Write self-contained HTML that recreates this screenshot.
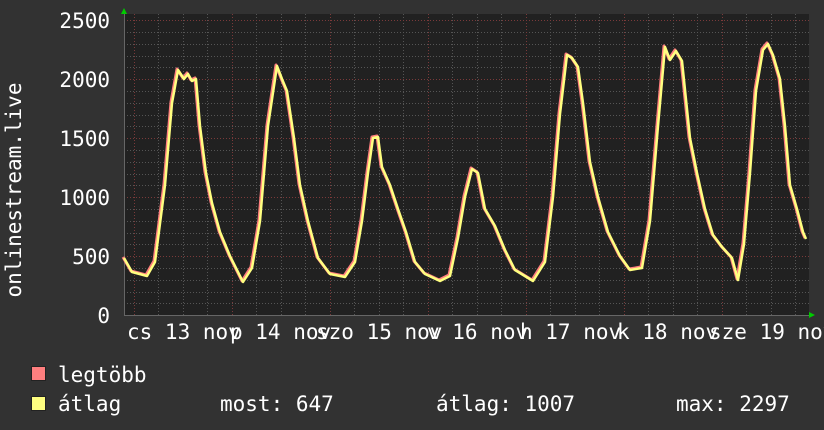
<!DOCTYPE html>
<html><head><meta charset="utf-8"><style>
html,body{margin:0;padding:0;background:#333333;}
svg{display:block}
text{font-family:"DejaVu Sans Mono","Liberation Mono",monospace;fill:#ffffff;}
</style></head><body>
<svg width="824" height="430" viewBox="0 0 824 430" xmlns="http://www.w3.org/2000/svg">
<rect width="824" height="430" fill="#323232"/>
<rect x="124" y="14" width="685" height="301" fill="#212121"/>
<g stroke="#555" stroke-width="1" stroke-dasharray="1,2">
<path d="M124 32.5H809M124 44.5H809M124 56.5H809M124 67.5H809M124 91.5H809M124 103.5H809M124 115.5H809M124 126.5H809M124 150.5H809M124 162.5H809M124 174.5H809M124 185.5H809M124 209.5H809M124 221.5H809M124 233.5H809M124 244.5H809M124 268.5H809M124 280.5H809M124 292.5H809M124 303.5H809"/>
<path d="M158.5 14V315M183.5 14V315M207.5 14V315M256.5 14V315M281.5 14V315M305.5 14V315M354.5 14V315M379.5 14V315M403.5 14V315M452.5 14V315M477.5 14V315M501.5 14V315M550.5 14V315M575.5 14V315M599.5 14V315M648.5 14V315M673.5 14V315M697.5 14V315M746.5 14V315M771.5 14V315M795.5 14V315"/>
</g>
<g stroke="#7a3a3a" stroke-width="1" stroke-dasharray="1,2">
<path d="M124 20.5H809M124 79.5H809M124 138.5H809M124 197.5H809M124 256.5H809"/>
<path d="M134.5 14V315M232.5 14V315M330.5 14V315M428.5 14V315M526.5 14V315M624.5 14V315M722.5 14V315"/>
</g>
<path d="M124 315.5H809" stroke="#666" stroke-width="1"/>
<path d="M124.5 14V315" stroke="#666" stroke-width="1"/>
<polygon points="121,14 127,14 124,8" fill="#00cc00"/>
<polygon points="809,312 809,318 815,315" fill="#00cc00"/>
<g fill="none" stroke-linejoin="round">
<polyline stroke="#ff7f7f" stroke-width="3" transform="translate(-1,-1)" points="124,258 132,272 147,276 155,262 165,185 172,103 178,70 184,79 188,74 192,81 196,79 200,126 206,173 212,203 220,232 230,256 243,282 252,268 260,221 268,126 277,66 282,79 287,91 294,138 300,185 308,221 318,258 330,274 345,277 355,262 362,221 368,173 373,138 378,137 382,167 390,185 398,209 406,232 415,262 425,274 440,281 450,276 458,238 465,197 472,169 478,173 485,209 495,226 505,250 515,270 533,281 545,262 553,197 560,114 567,55 572,58 578,67 583,103 590,162 598,197 608,232 620,256 630,270 642,268 650,221 658,126 665,47 670,60 676,51 682,61 690,138 697,173 705,209 713,235 722,247 732,258 738,280 744,244 750,173 756,91 763,50 768,44 773,55 780,79 785,126 790,185 797,209 803,232 806,239"/>
<polyline stroke="#ffff80" stroke-width="2.5" points="124,258 132,272 147,276 155,262 165,185 172,103 178,70 184,79 188,74 192,81 196,79 200,126 206,173 212,203 220,232 230,256 243,282 252,268 260,221 268,126 277,66 282,79 287,91 294,138 300,185 308,221 318,258 330,274 345,277 355,262 362,221 368,173 373,138 378,137 382,167 390,185 398,209 406,232 415,262 425,274 440,281 450,276 458,238 465,197 472,169 478,173 485,209 495,226 505,250 515,270 533,281 545,262 553,197 560,114 567,55 572,58 578,67 583,103 590,162 598,197 608,232 620,256 630,270 642,268 650,221 658,126 665,47 670,60 676,51 682,61 690,138 697,173 705,209 713,235 722,247 732,258 738,280 744,244 750,173 756,91 763,50 768,44 773,55 780,79 785,126 790,185 797,209 803,232 806,239"/>
</g>
<g font-size="21" text-anchor="end">
<text x="110" y="28">2500</text>
<text x="110" y="87">2000</text>
<text x="110" y="146">1500</text>
<text x="110" y="205">1000</text>
<text x="110" y="264">500</text>
<text x="110" y="323">0</text>
</g>
<g font-size="21">
<text x="127" y="339">cs 13 nov</text>
<text x="230" y="339">p 14 nov</text>
<text x="316" y="339">szo 15 nov</text>
<text x="427" y="339">v 16 nov</text>
<text x="520" y="339">h 17 nov</text>
<text x="617" y="339">k 18 nov</text>
<text x="709" y="339">sze 19 nov</text>
</g>
<text font-size="21" transform="translate(21,190) rotate(-90)" text-anchor="middle">onlinestream.live</text>
<rect x="31.5" y="366.5" width="14" height="14" fill="#ff7f7f" stroke="#222"/>
<rect x="31.5" y="396.5" width="14" height="14" fill="#ffff80" stroke="#222"/>
<g font-size="21">
<text x="58" y="382">legtöbb</text>
<text x="58" y="411">átlag</text>
<text x="220" y="411">most: 647</text>
<text x="436" y="411">átlag: 1007</text>
<text x="676" y="411">max: 2297</text>
</g>
</svg>
</body></html>
